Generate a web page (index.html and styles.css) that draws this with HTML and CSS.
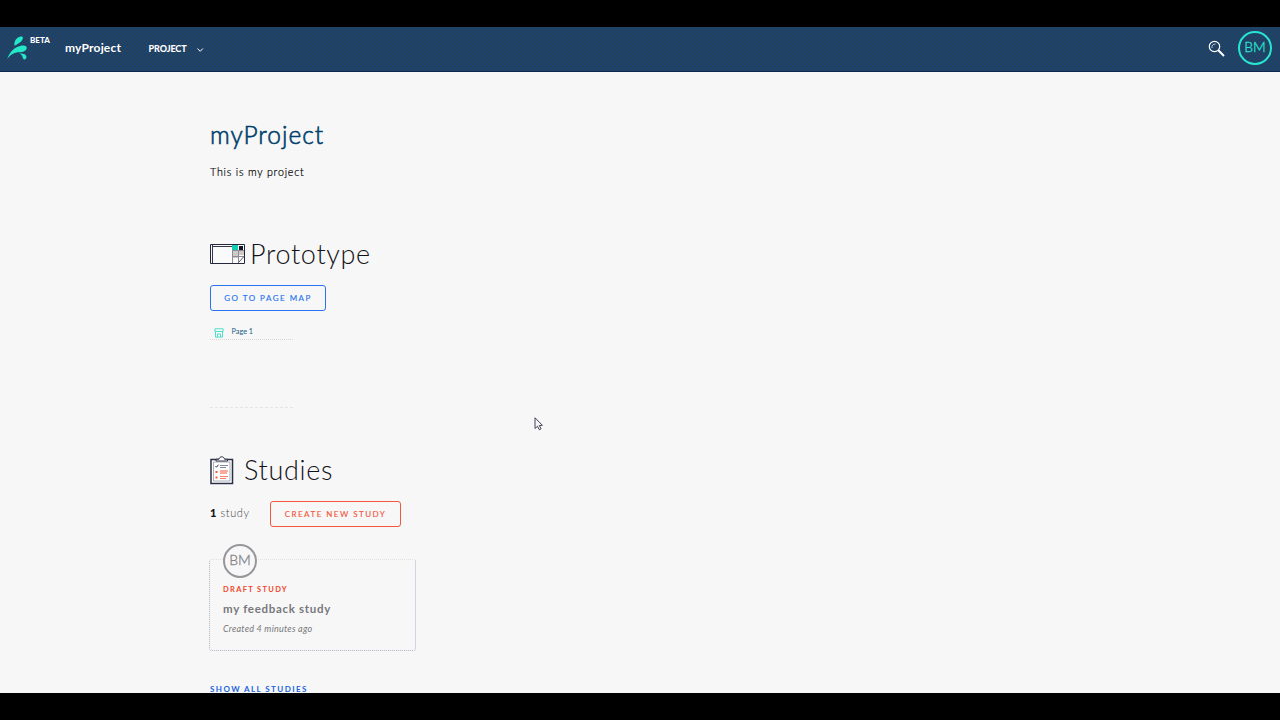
FILE: index.html
```html
<!DOCTYPE html>
<html lang="en">
<head>
<meta charset="utf-8">
<title>myProject</title>
<link rel="stylesheet" href="styles.css">
</head>
<body>
<div class="app">
  <header class="topbar">
    <svg class="logo" width="20" height="24" viewBox="0 0 20 24"><g fill="#24e8c8"><path d="M7.500 9.800C6.900 7 7.800 4.200 10.400 2.100c2.500-1.800 5.800-2.200 5.500.2-.4 3-4.800 5.500-8.400 7.500z"/><path d="M.2 23C2.400 17.500 5 13.600 10 11.100c4.500-2.200 9.600-2.200 9.700.6.100 2.800-3.600 4.600-7.600 4.600-5 0-8.200 2.200-11.900 6.700z"/><path d="M12.500 17.600c3.500-.3 7 .7 6.900 3.500-.1 2.300-1.800 3-3 1.800-1.200-1.300-.6-3.700-3.900-5.300z"/></g></svg>
    <span class="beta">BETA</span>
    <span class="project-name">myProject</span>
    <nav class="menu"><span>PROJECT</span><svg width="8" height="6" viewBox="0 0 8 6" fill="none" stroke="#fff"><path d="M1.500 1.500 4.200 4.300 6.900 1.500"/></svg></nav>
    <svg class="search" width="18" height="18" viewBox="0 0 18 18" fill="none" stroke="#fff"><circle cx="6.500" cy="6.500" r="5.200" stroke-width="1.200"/><path d="M4 8C3.500 5.500 5 4 7.500 4" stroke-width=".7"/><path d="m10.300 10.300 5.700 5.700" stroke-width="2"/></svg>
    <span class="avatar">BM</span>
  </header>
  <main class="content">
    <h1 class="title">myProject</h1>
    <p class="description">This is my project</p>

    <h2 class="section prototype">
      <svg width="35" height="20" viewBox="0 0 35 20"><path d="M.5.500h34v19H.5z" fill="#fafafa" stroke="#25273c"/><path d="M28 6h6v5h-6zM22 6h6v8h-6z" fill="#cfc9c8"/><path d="M2.500 1v18M3 2.500h19" stroke="#34364a" fill="none"/><path d="M22.500 6v13M28.500 6v13M22 6.500h12M23 12.500h11" stroke="#8c8b97" fill="none"/><path d="M22 1h6v5h-6z" fill="#12cdae"/><path d="M29 2h4v4h-4z" fill="#15172d"/><path d="M28.500 18.500l5.500-6" stroke="#55566a" fill="none"/></svg>
      <span>Prototype</span>
    </h2>
    <a class="button blue">GO TO PAGE MAP</a>
    <div class="pages">
      <div class="page"><svg width="10" height="10" viewBox="0 0 10 10" fill="none" stroke="#3fdcc4" stroke-width=".9"><path d="M.9.800h8.200v2.700H.9zM1.500 3.500v5.600h7V3.500M3.500 9V6h3v3"/></svg><span>Page 1</span></div>
    </div>

    <h2 class="section studies">
      <svg width="24" height="29" viewBox="0 0 24 29"><path d="M1 3.500h21.500v24H1z" fill="#fff" stroke="#2b2f46" stroke-width="1.500"/><path d="M3.500 6h16.500v19H3.500z" fill="none" stroke="#8a8d9c" stroke-width=".7"/><path d="M0 28.500h23" stroke="#c6c7d0"/><path d="M6 5V3.200h3C9.500 0 14 0 14.500 3.200h3V5z" fill="#fff" stroke="#2b2f46"/><path d="m5.500 10 1 1.200 2-2.500" stroke="#2b2f46" fill="none"/><path d="M10 9.500h8M10 11.500h6" stroke="#85899a"/><path d="M5.500 15h2v2h-2zM5.500 20.500h2v2h-2zM10 14.500h8v1h-8zM10 16.500h7v1h-7z" fill="#f4573d"/><path d="M10 20.500h8M10 22.500h6" stroke="#f4816e"/></svg>
      <span>Studies</span>
    </h2>
    <div class="study-bar"><span class="count"><b>1</b> study</span><a class="button red">CREATE NEW STUDY</a></div>
    <article class="card">
      <span class="avatar gray">BM</span>
      <div class="status">DRAFT STUDY</div>
      <h3 class="study-title">my feedback study</h3>
      <div class="created">Created 4 minutes ago</div>
    </article>
    <a class="show-all">SHOW ALL STUDIES</a>
  </main>
  <svg class="cursor" width="10" height="14" viewBox="0 0 10 14"><path d="M1 .8v10.700l2.500-2.200 1.800 3.500 1.800-1-1.800-3.200 3.100-.3z" fill="#f4f4f8" stroke="#303047" stroke-width=".9"/></svg>
</div>
</body>
</html>
```
FILE: styles.css
```css
* { box-sizing: border-box; }
body { margin: 0; background: #000; padding: 27px 0; height: 720px; overflow: hidden; font-family: Lato, "Open Sans", sans-serif; }
.app { position: relative; height: 666px; overflow: hidden; background: #f7f7f7; }
.topbar { height: 45px; display: flex; align-items: center; padding: 0 8px 2px 7px; color: #fff; border-bottom: 1px solid #102550; background: repeating-linear-gradient(135deg, #1a4070 0 1.414px, #26445c 1.414px 2.828px); }
.logo { margin-top: -1px; }
.beta { width: 38px; padding-left: 3px; font-size: 8px; font-weight: 900; line-height: 10px; margin-top: -16px; }
.project-name { width: 83.500px; font-size: 12px; font-weight: 700; letter-spacing: .2px; margin-top: -2px; }
.menu { display: flex; align-items: center; gap: 9px; font-size: 9px; font-weight: 900; letter-spacing: -.1px; margin-right: auto; }
.menu svg { margin-top: 4px; }
.search { margin: 1px 12px 0 0; }
.avatar { width: 34px; height: 34px; border: 2px solid #27e5d0; border-radius: 50%; color: #27e5d0; font-size: 14px; font-weight: 300; line-height: 28px; text-align: center; flex: none; -webkit-text-stroke: .3px; }
.content { padding: 47px 0 0 210px; display: flex; flex-direction: column; align-items: flex-start; }
.title { margin: 0; font-size: 24.500px; font-weight: 300; letter-spacing: 1px; line-height: 31px; color: #003f6b; -webkit-text-stroke: .6px; }
.description { margin: 14px 0 0; font-size: 10.700px; font-weight: 300; line-height: 16px; letter-spacing: .8px; color: #000; -webkit-text-stroke: .2px; }
.section { margin: 0; display: flex; align-items: center; height: 36px; font-size: 27px; font-weight: 300; letter-spacing: .68px; line-height: 36px; color: #121218; }
.prototype { margin-top: 56px; gap: 5px; }
.studies { margin-top: 44px; gap: 10px; }
.button { height: 26px; border: 1px solid; border-radius: 3px; line-height: 24px; font-size: 8px; letter-spacing: 1.480px; text-align: center; -webkit-text-stroke: .15px; }
.blue { width: 116px; margin-top: 13px; color: #2874f0; }
.red { width: 131px; color: #f4573d; }
.pages { width: 83px; height: 85px; margin-top: 12px; border-bottom: 1px dashed #e5e5e5; }
.page { height: 17px; display: flex; align-items: center; gap: 8px; padding: 1px 0 0 3.500px; border-bottom: 1px dotted #d8d8d8; color: #175c82; font-size: 7.300px; }
.page svg { margin-top: 2px; }
.study-bar { display: flex; align-items: center; margin-top: 13px; }
.count { width: 60px; margin-top: -3px; font-size: 11px; font-weight: 300; letter-spacing: .6px; color: #404046; }
.count b { color: #111; font-weight: 900; }
.card { width: 207px; height: 92px; margin: 32px 0 0 -1px; padding: 0 13px; border: 1px dotted #aeb4c4; border-top-color: #e2e2e2; border-radius: 3px; }
.gray { display: block; margin-top: -16px; border-color: #96969b; color: #808086; background: #f7f7f7; }
.status { margin-top: 6px; font-size: 7.500px; font-weight: 700; line-height: 12px; letter-spacing: 1.320px; color: #f0452b; }
.study-title { margin: 5px 0 0; font-size: 11.500px; font-weight: 700; line-height: 16px; letter-spacing: .7px; color: #77777c; }
.created { margin-top: 6px; font-size: 9px; line-height: 12px; font-style: italic; letter-spacing: .24px; color: #77777c; }
.show-all { margin-top: 31px; font-size: 8px; font-weight: 700; line-height: 14px; letter-spacing: 1.420px; color: #1765df; }
.cursor { position: absolute; left: 534px; top: 390px; }
```
